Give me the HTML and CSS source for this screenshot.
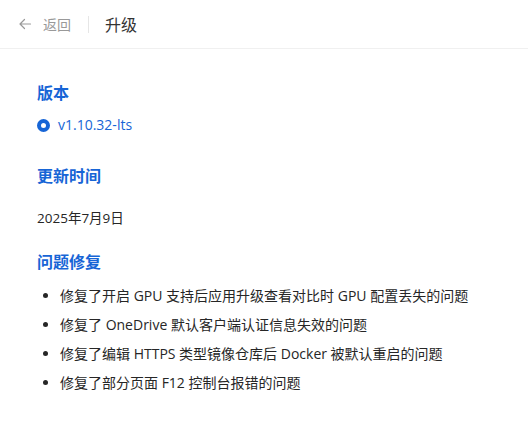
FILE: index.html
```html
<!DOCTYPE html>
<html lang="zh-CN">
<head>
<meta charset="utf-8">
<title>升级</title>
<link rel="stylesheet" href="styles.css">
</head>
<body>
<header class="topbar">
  <a class="back">
    <svg class="back-icon" width="14" height="14" viewBox="0 0 14 14" aria-hidden="true">
      <path d="M12.5 7H2M6.5 2.5L2 7l4.5 4.5" fill="none" stroke="currentColor" stroke-width="1.2" stroke-linecap="round" stroke-linejoin="round"/>
    </svg>
    <span>返回</span>
  </a>
  <span class="divider"></span>
  <h1 class="title">升级</h1>
</header>
<main class="content">
  <section class="section">
    <h2 class="heading">版本</h2>
    <div class="version">
      <span class="radio"></span>
      <span>v1.10.32-lts</span>
    </div>
  </section>
  <section class="section section-date">
    <h2 class="heading">更新时间</h2>
    <p class="date">2025年7月9日</p>
  </section>
  <section class="section section-fixes">
    <h2 class="heading">问题修复</h2>
    <ul class="fixes">
      <li>修复了开启 GPU 支持后应用升级查看对比时 GPU 配置丢失的问题</li>
      <li>修复了 OneDrive 默认客户端认证信息失效的问题</li>
      <li>修复了编辑 HTTPS 类型镜像仓库后 Docker 被默认重启的问题</li>
      <li>修复了部分页面 F12 控制台报错的问题</li>
    </ul>
  </section>
</main>
</body>
</html>
```
FILE: styles.css
```css
* { box-sizing: border-box; }
html, body { margin: 0; padding: 0; background: #fff; }
body {
  font-family: "Open Sans", "Noto Sans CJK SC", sans-serif;
  color: #262626;
  width: 528px;
}
.topbar {
  display: flex;
  align-items: center;
  height: 49px;
  padding: 0 0 0 18px;
  border-bottom: 1px solid #f0f0f0;
}
.back {
  display: flex;
  align-items: center;
  gap: 11px;
  color: #999;
  font-size: 14px;
}
.back-icon { display: block; }
.divider {
  width: 1px;
  height: 17px;
  background: #e6e6e6;
  margin: 0 16px 0 17px;
}
.title {
  margin: 0;
  font-size: 16px;
  font-weight: 400;
  color: #333;
}
.content {
  padding: 32px 37px 0;
}
.section { margin: 0; }
.heading {
  margin: 0;
  font-size: 16px;
  font-weight: 700;
  color: #1765d6;
  line-height: 24px;
}
.version {
  display: flex;
  align-items: center;
  gap: 8px;
  margin-top: 10px;
  color: #1765d6;
  font-size: 14px;
  line-height: 20px;
}
.radio {
  width: 13px;
  height: 13px;
  border-radius: 50%;
  border: 4.5px solid #1765d6;
  background: #fff;
}
.section-date { margin-top: 29px; }
.section-fixes { margin-top: 22px; }
.date {
  margin: 20px 0 0;
  font-size: 13.5px;
  line-height: 20px;
  color: #262626;
}
.fixes {
  margin: 12px 0 0;
  padding: 0 0 0 23px;
  font-size: 14px;
  line-height: 20px;
  color: #262626;
}
.fixes li { margin-top: 9px; }
.fixes li:first-child { margin-top: 0; }
```
